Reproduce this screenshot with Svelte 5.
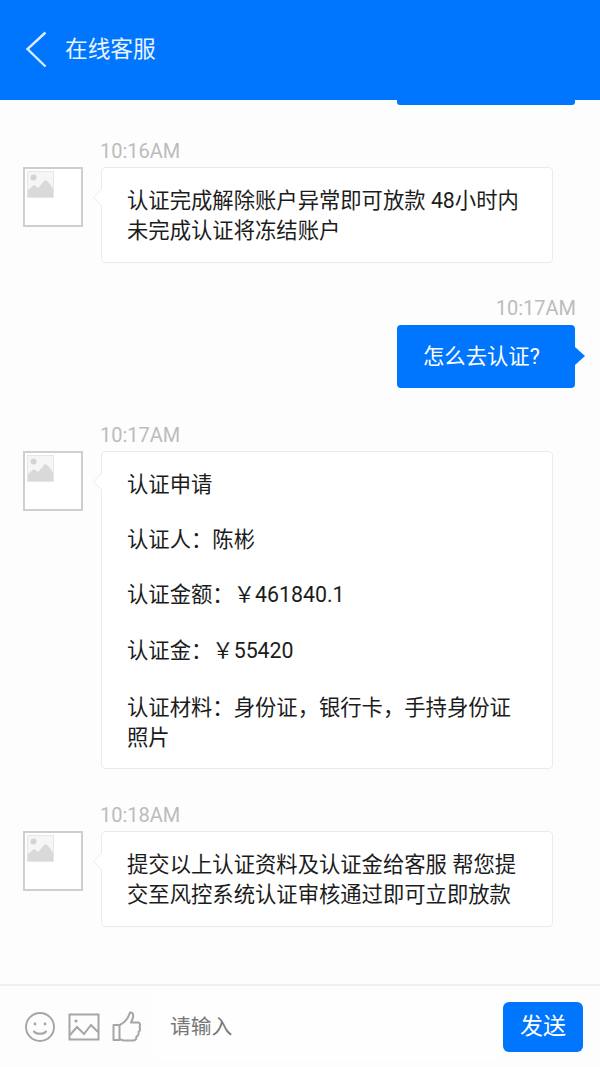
<script>
  const cjk = 1;
</script>

{#snippet avatar()}
  <div class="avatar">
    <svg width="27" height="27" viewBox="0 0 27 27">
      <rect width="27" height="27" fill="#f6f6f6"/>
      <rect x="0.5" y="0.5" width="26" height="26" fill="none" stroke="#e6e6e6"/>
      <circle cx="6.5" cy="6.5" r="3" fill="#d4d4d4"/>
      <path d="M1 26V19L7 14L11 17L18 9C21 10 24 14 26 18V26Z" fill="#d9d9d9"/>
    </svg>
  </div>
{/snippet}

<div class="page">
  <header class="top">
    <svg class="back" width="24" height="38" viewBox="0 0 24 38">
      <path d="M21.5 2.5L3.5 19L21.5 36.5" fill="none" stroke="#d9ebff" stroke-width="2.4"/>
    </svg>
    <span class="title">在线客服</span>
  </header>

  <main class="chat">
    <div class="cut"></div>

    <section class="msg first">
      <div class="time">10:16AM</div>
      <div class="row">
        {@render avatar()}
        <div class="bubble">
          <p>认证完成解除账户异常即可放款 48小时内未完成认证将冻结账户</p>
        </div>
      </div>
    </section>

    <section class="msg mine">
      <div class="time">10:17AM</div>
      <div class="bubble-mine">怎么去认证?</div>
    </section>

    <section class="msg third">
      <div class="time">10:17AM</div>
      <div class="row">
        {@render avatar()}
        <div class="bubble stack">
          <p>认证申请</p>
          <p>认证人：陈彬</p>
          <p>认证金额：￥461840.1</p>
          <p>认证金：￥55420</p>
          <p>认证材料：身份证，银行卡，手持身份证照片</p>
        </div>
      </div>
    </section>

    <section class="msg fourth">
      <div class="time">10:18AM</div>
      <div class="row">
        {@render avatar()}
        <div class="bubble">
          <p>提交以上认证资料及认证金给客服 帮您提交至风控系统认证审核通过即可立即放款</p>
        </div>
      </div>
    </section>
  </main>

  <footer class="bar">
    <div class="tools">
      <svg width="32" height="32" viewBox="0 0 32 32" fill="none" stroke="#a6a6a6" stroke-width="2">
        <circle cx="16" cy="16" r="14"/>
        <circle cx="11" cy="13" r="1.4" fill="#a6a6a6" stroke="none"/>
        <circle cx="21" cy="13" r="1.4" fill="#a6a6a6" stroke="none"/>
        <path d="M10 20.5C12.5 23.5 19.5 23.5 22 20.5" stroke-linecap="round"/>
      </svg>
      <svg width="32" height="28" viewBox="0 0 32 28" fill="none" stroke="#a6a6a6" stroke-width="2">
        <rect x="1.5" y="1.5" width="29" height="25"/>
        <circle cx="8" cy="8" r="1.6" fill="#a6a6a6" stroke="none"/>
        <path d="M2 22L9 14L16 21L23 12L30 19"/>
      </svg>
      <svg width="30" height="32" viewBox="0 0 30 32" fill="none" stroke="#a6a6a6" stroke-width="2" stroke-linejoin="round">
        <path d="M1.5 14H7.5V29H1.5Z"/>
        <path d="M7.5 14C12 12 16 8 18 1.5C21 1 22 4 20.5 8L19 11.5H26C28 11.5 28.5 14 27.5 16C28.5 18 28 20 26.5 21C27 23 26 25 24.5 25.5C24.5 28 23 29.5 21 29.5H12C10 29.5 9 28.5 7.5 28"/>
      </svg>
    </div>
    <div class="input">请输入</div>
    <button class="send">发送</button>
  </footer>
</div>

<style>
  :global(body) {
    margin: 0;
    background: #fdfdfd;
  }
  .page {
    width: 600px;
    height: 1067px;
    display: flex;
    flex-direction: column;
    overflow: hidden;
    font-family: "Roboto", "Noto Sans CJK SC", sans-serif;
    background: #fdfdfd;
  }
  .top {
    flex: 0 0 100px;
    box-sizing: border-box;
    background: #0076fe;
    display: flex;
    align-items: center;
    padding: 0 0 2px 24px;
    gap: 17px;
  }
  .back {
    display: block;
    flex: none;
  }
  .title {
    color: #e8f3ff;
    font-size: 22.7px;
    line-height: 30px;
    padding-top: 2px;
  }
  .chat {
    flex: 1;
    min-height: 0;
    overflow: hidden;
  }
  .cut {
    width: 178px;
    height: 5px;
    margin-left: 397px;
    background: #0076fe;
    border-radius: 0 0 3px 3px;
  }
  .msg {
    display: flex;
    flex-direction: column;
  }
  .first {
    margin-top: 36px;
  }
  .mine {
    margin-top: 35px;
    align-items: flex-end;
    padding-right: 25px;
  }
  .third {
    margin-top: 37px;
  }
  .fourth {
    margin-top: 36px;
  }
  .time {
    font-size: 20px;
    line-height: 20px;
    height: 24px;
    margin-bottom: 2px;
    padding-left: 100px;
    color: #bcbcbc;
  }
  .mine .time {
    padding-left: 0;
    margin-bottom: 3px;
    margin-right: -1px;
  }
  .row {
    display: flex;
    align-items: flex-start;
    padding-left: 23px;
    gap: 18px;
  }
  .avatar {
    width: 60px;
    height: 60px;
    box-sizing: border-box;
    border: 2px solid #cfcfcf;
    background: #fff;
    padding: 2px;
    flex: none;
  }
  .avatar svg {
    display: block;
  }
  .bubble {
    position: relative;
    width: 452px;
    box-sizing: border-box;
    background: #fff;
    border: 1px solid #ebebeb;
    border-radius: 4px;
    padding: 18px 25px 16px;
    color: #1c1c1c;
    font-size: 21.33px;
    line-height: 30px;
  }
  .bubble::before {
    content: "";
    position: absolute;
    left: -8px;
    top: 22px;
    width: 14px;
    height: 14px;
    background: #fff;
    border-left: 1px solid #ebebeb;
    border-bottom: 1px solid #ebebeb;
    transform: rotate(45deg) scale(0.8);
  }
  .bubble p {
    margin: 0;
    position: relative;
  }
  .bubble.stack {
    padding-bottom: 15px;
  }
  .stack p + p {
    margin-top: 25px;
  }
  .stack p:nth-child(4) {
    margin-top: 26px;
  }
  .stack p:nth-child(5) {
    margin-top: 27px;
  }
  .bubble-mine {
    position: relative;
    width: 178px;
    height: 63px;
    box-sizing: border-box;
    background: #0076fe;
    border-radius: 4px;
    color: #fff;
    font-size: 21.33px;
    line-height: 64px;
    padding-left: 26px;
  }
  .bubble-mine::after {
    content: "";
    position: absolute;
    right: -10px;
    top: 22px;
    width: 0;
    height: 0;
    border-left: 10px solid #0076fe;
    border-top: 9px solid transparent;
    border-bottom: 9px solid transparent;
  }
  .bar {
    flex: 0 0 83px;
    box-sizing: border-box;
    border-top: 2px solid #efefef;
    background: #fdfdfd;
    display: flex;
    align-items: center;
    padding: 0 17px 0 24px;
  }
  .tools {
    display: flex;
    align-items: center;
    gap: 12px;
    width: 129px;
    flex: none;
  }
  .tools svg {
    display: block;
    flex: none;
  }
  .input {
    flex: 1;
    height: 66px;
    box-sizing: border-box;
    padding: 18px 0 0 17px;
    background: #fefefe;
    color: #777;
    font-size: 20.8px;
    line-height: 30px;
  }
  .send {
    width: 80px;
    height: 50px;
    border: 0;
    padding: 0 0 5px;
    border-radius: 6px;
    background: #0076fe;
    color: #fff;
    font-family: inherit;
    font-size: 23px;
  }
</style>
